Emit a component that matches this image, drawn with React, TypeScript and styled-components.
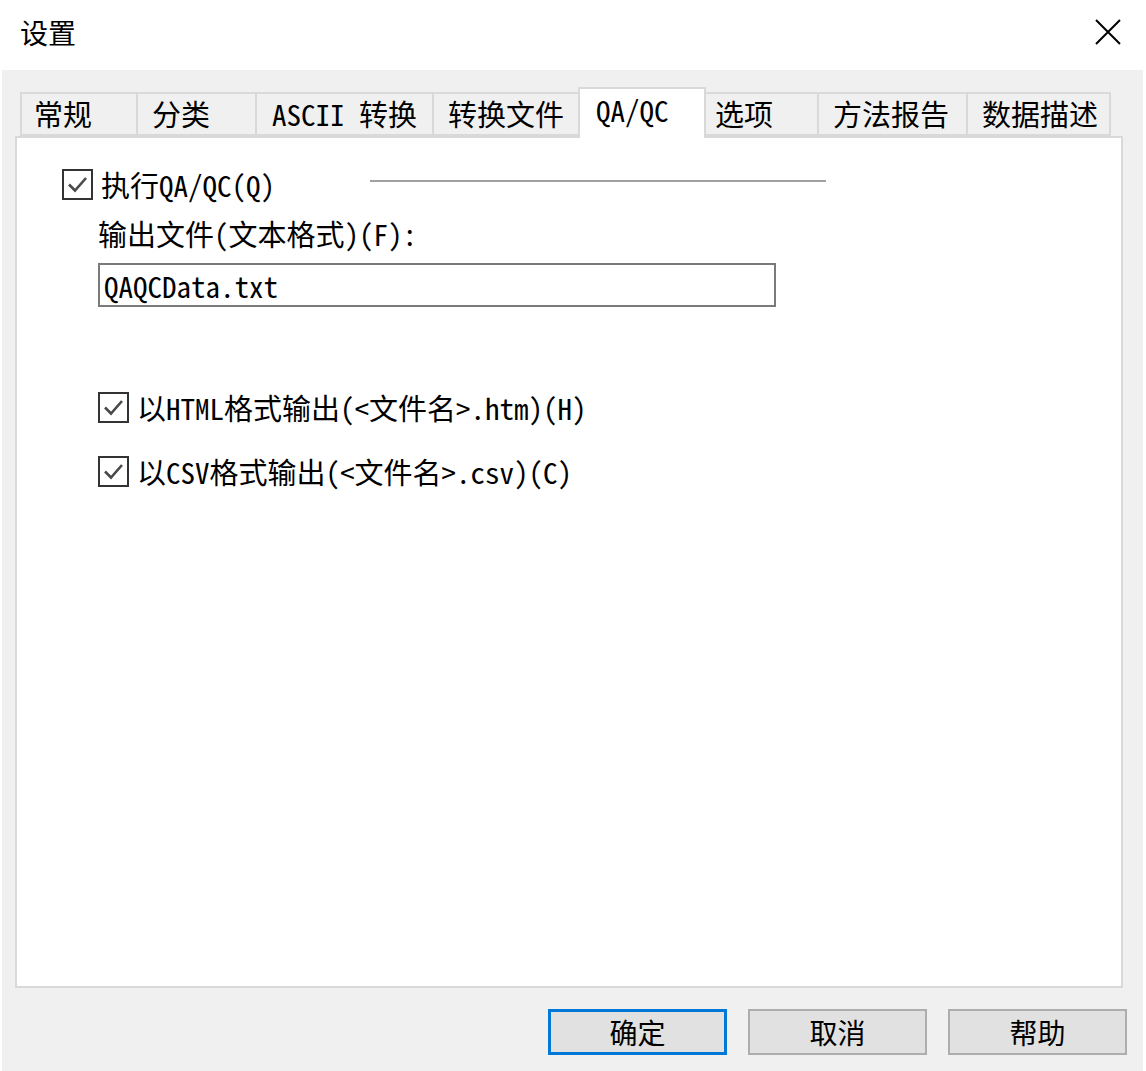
import React from "react";
import styled, { createGlobalStyle } from "styled-components";

const GlobalStyle = createGlobalStyle`
  html, body { margin: 0; padding: 0; background: #ffffff; }
  * { box-sizing: border-box; }
`;

const MONO = `"Noto Sans Mono CJK SC", "Noto Sans CJK SC", "Liberation Mono", monospace`;

const Window = styled.div`
  width: 1146px;
  height: 1071px;
  background: #ffffff;
  display: flex;
  flex-direction: column;
  overflow: hidden;
`;

const TitleBar = styled.div`
  height: 70px;
  display: flex;
  align-items: center;
  justify-content: space-between;
  padding: 0 25px 6px 20px;
`;

const Title = styled.div`
  font-family: "Noto Sans CJK SC", sans-serif;
  font-size: 28px;
  color: #000;
  line-height: 1;
`;

const CloseButton = styled.div`
  width: 26px;
  height: 26px;
  display: flex;
  align-items: center;
  justify-content: center;
`;

const Body = styled.div`
  flex: 1;
  margin: 0 3px 0 2px;
  background: #f0f0f0;
  display: flex;
  flex-direction: column;
  padding-top: 17px;
`;

const TabStrip = styled.div`
  display: flex;
  align-items: flex-end;
  padding-left: 18px;
  height: 49px;
  position: relative;
  z-index: 2;
`;

const Tab = styled.div<{ $w: number; $active?: boolean; $pl: number }>`
  width: ${(p) => p.$w}px;
  height: ${(p) => (p.$active ? 51 : 44)}px;
  margin-left: -2px;
  margin-bottom: ${(p) => (p.$active ? -2 : 0)}px;
  background: ${(p) => (p.$active ? "#ffffff" : "#f0f0f0")};
  border: 2px solid #d9d9d9;
  border-bottom: ${(p) => (p.$active ? "none" : "2px solid #d9d9d9")};
  padding-left: ${(p) => p.$pl}px;
  padding-top: ${(p) => (p.$active ? 5 : 4)}px;
  font-family: ${MONO};
  font-size: 29px;
  line-height: 30px;
  color: #000;
  white-space: nowrap;
  &:first-child { margin-left: 0; }
`;

const Panel = styled.div`
  margin-left: 13px;
  width: 1108px;
  height: 852px;
  background: #ffffff;
  border: 2px solid #d9d9d9;
  position: relative;
  z-index: 1;
  display: flex;
  flex-direction: column;
  padding: 29px 0 0 45px;
`;

const CheckRow = styled.div<{ $indent?: number; $mt?: number }>`
  display: flex;
  align-items: center;
  margin-left: ${(p) => p.$indent ?? 0}px;
  margin-top: ${(p) => p.$mt ?? 0}px;
  height: 34px;
`;

const Box = styled.div`
  width: 31px;
  height: 31px;
  border: 2px solid #333333;
  background: #ffffff;
  display: flex;
  align-items: center;
  justify-content: center;
  flex: none;
`;

const Label = styled.span<{ $gap?: number }>`
  font-family: ${MONO};
  font-size: 29px;
  line-height: 34px;
  color: #000;
  margin-left: ${(p) => p.$gap ?? 8}px;
  white-space: nowrap;
`;

const Rule = styled.div`
  width: 456px;
  height: 2px;
  background: #a0a0a0;
  margin-left: 95px;
  margin-top: -6px;
`;

const FieldLabel = styled.div`
  font-family: ${MONO};
  font-size: 29px;
  line-height: 34px;
  color: #000;
  margin: 15px 0 0 36px;
  white-space: nowrap;
`;

const Input = styled.div`
  margin: 13px 0 0 36px;
  width: 678px;
  height: 44px;
  border: 2px solid #7a7a7a;
  background: #fff;
  display: flex;
  align-items: center;
  padding-left: 4px;
  font-family: ${MONO};
  font-size: 29px;
  color: #000;
`;

const Footer = styled.div`
  display: flex;
  justify-content: flex-end;
  gap: 21px;
  padding: 21px 16px 0 0;
`;

const Button = styled.div<{ $primary?: boolean }>`
  width: 179px;
  height: 46px;
  background: #e1e1e1;
  border: ${(p) => (p.$primary ? "3px solid #0078d7" : "2px solid #adadad")};
  display: flex;
  align-items: center;
  justify-content: center;
  font-family: "Noto Sans CJK SC", sans-serif;
  font-size: 28px;
  color: #000;
`;

const Check = () => (
  <svg width="25" height="25" viewBox="0 0 25 25">
    <path d="M4 12.5 L10 18.5 L21 6" fill="none" stroke="#4a4a4a" strokeWidth="2.6" />
  </svg>
);

const Checkbox: React.FC<{ label: string; indent?: number; mt?: number }> = ({ label, indent, mt }) => (
  <CheckRow $indent={indent} $mt={mt}>
    <Box>
      <Check />
    </Box>
    <Label>{label}</Label>
  </CheckRow>
);

const tabs = [
  { t: "常规", w: 118, pl: 12 },
  { t: "分类", w: 121, pl: 14 },
  { t: "ASCII 转换", w: 179, pl: 15 },
  { t: "转换文件", w: 148, pl: 14 },
  { t: "QA/QC", w: 128, pl: 16, active: true },
  { t: "选项", w: 115, pl: 9 },
  { t: "方法报告", w: 151, pl: 14 },
  { t: "数据描述", w: 145, pl: 14 },
];

export default function App() {
  return (
    <>
      <GlobalStyle />
      <Window>
        <TitleBar>
          <Title>设置</Title>
          <CloseButton>
            <svg width="26" height="26" viewBox="0 0 26 26">
              <path d="M1 1 L25 25 M25 1 L1 25" stroke="#000" strokeWidth="2" />
            </svg>
          </CloseButton>
        </TitleBar>
        <Body>
          <TabStrip>
            {tabs.map((tb) => (
              <Tab key={tb.t} $w={tb.w} $pl={tb.pl} $active={tb.active}>
                {tb.t}
              </Tab>
            ))}
          </TabStrip>
          <Panel>
            <CheckRow>
              <Box>
                <Check />
              </Box>
              <Label>执行QA/QC(Q)</Label>
              <Rule />
            </CheckRow>
            <FieldLabel>输出文件(文本格式)(F):</FieldLabel>
            <Input>QAQCData.txt</Input>
            <Checkbox label="以HTML格式输出(<文件名>.htm)(H)" indent={36} mt={83} />
            <Checkbox label="以CSV格式输出(<文件名>.csv)(C)" indent={36} mt={30} />
          </Panel>
          <Footer>
            <Button $primary>确定</Button>
            <Button>取消</Button>
            <Button>帮助</Button>
          </Footer>
        </Body>
      </Window>
    </>
  );
}
